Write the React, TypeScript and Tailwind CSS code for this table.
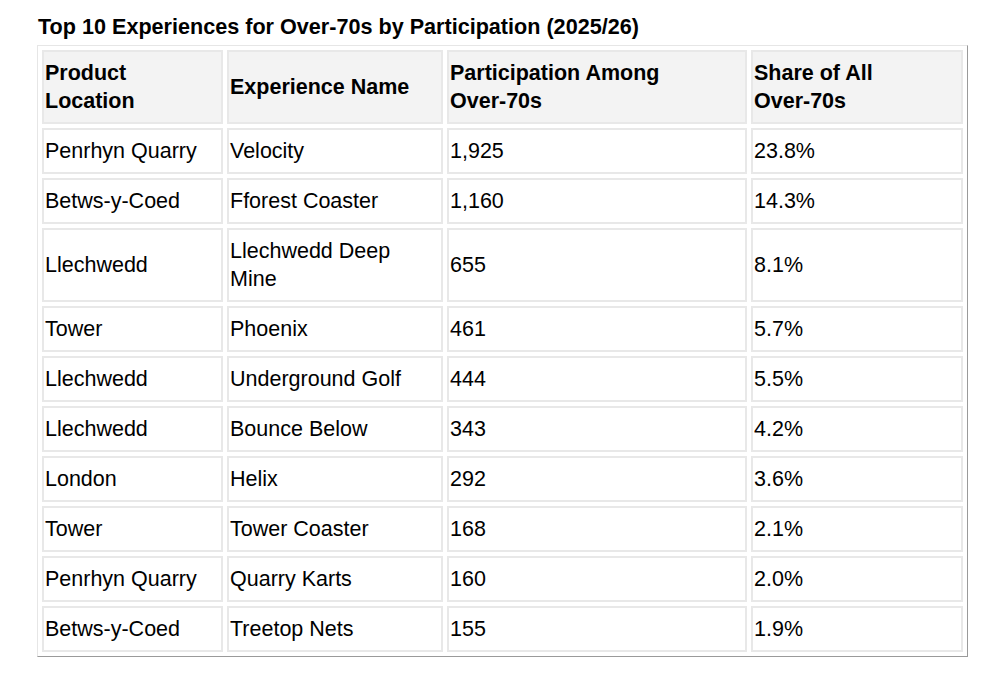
import React from 'react';

const rows = [
  { location: 'Penrhyn Quarry', name: 'Velocity', count: '1,925', share: '23.8%' },
  { location: 'Betws-y-Coed', name: 'Fforest Coaster', count: '1,160', share: '14.3%' },
  { location: 'Llechwedd', name: 'Llechwedd Deep Mine', count: '655', share: '8.1%' },
  { location: 'Tower', name: 'Phoenix', count: '461', share: '5.7%' },
  { location: 'Llechwedd', name: 'Underground Golf', count: '444', share: '5.5%' },
  { location: 'Llechwedd', name: 'Bounce Below', count: '343', share: '4.2%' },
  { location: 'London', name: 'Helix', count: '292', share: '3.6%' },
  { location: 'Tower', name: 'Tower Coaster', count: '168', share: '2.1%' },
  { location: 'Penrhyn Quarry', name: 'Quarry Karts', count: '160', share: '2.0%' },
  { location: 'Betws-y-Coed', name: 'Treetop Nets', count: '155', share: '1.9%' },
];

const cell = 'border-2 border-[#e8e8e8] pl-[1px] pr-[3px] py-[7px] text-left align-middle';

export default function App() {
  return (
    <div className="min-h-[675px] bg-white pl-[37px] pt-[14px] text-black" style={{ fontFamily: '"Liberation Sans", Arial, sans-serif' }}>
      <h2 className="mb-[5px] pl-[1px] text-[21.6px] font-bold leading-[26px]">
        Top 10 Experiences for Over-70s by Participation (2025/26)
      </h2>
      <table className="w-[931px] table-fixed border-separate border-spacing-[4px] border border-t-[#e6e6e6] border-l-[#e6e6e6] border-r-[#9a9a9a] border-b-[#9a9a9a] text-[21.5px] leading-[28px]">
        <colgroup>
          <col className="w-[181px]" />
          <col className="w-[216px]" />
          <col className="w-[300px]" />
          <col className="w-[212px]" />
        </colgroup>
        <thead>
          <tr className="bg-[#f3f3f3]">
            <th className={`${cell} font-bold`}>Product Location</th>
            <th className={`${cell} font-bold`}>Experience Name</th>
            <th className={`${cell} font-bold`}>
              Participation Among <span className="whitespace-nowrap">Over-70s</span>
            </th>
            <th className={`${cell} font-bold`}>
              Share of All <span className="whitespace-nowrap">Over-70s</span>
            </th>
          </tr>
        </thead>
        <tbody>
          {rows.map((r, i) => (
            <tr key={i}>
              <td className={cell}>{r.location}</td>
              <td className={cell}>{r.name}</td>
              <td className={cell}>{r.count}</td>
              <td className={cell}>{r.share}</td>
            </tr>
          ))}
        </tbody>
      </table>
    </div>
  );
}
